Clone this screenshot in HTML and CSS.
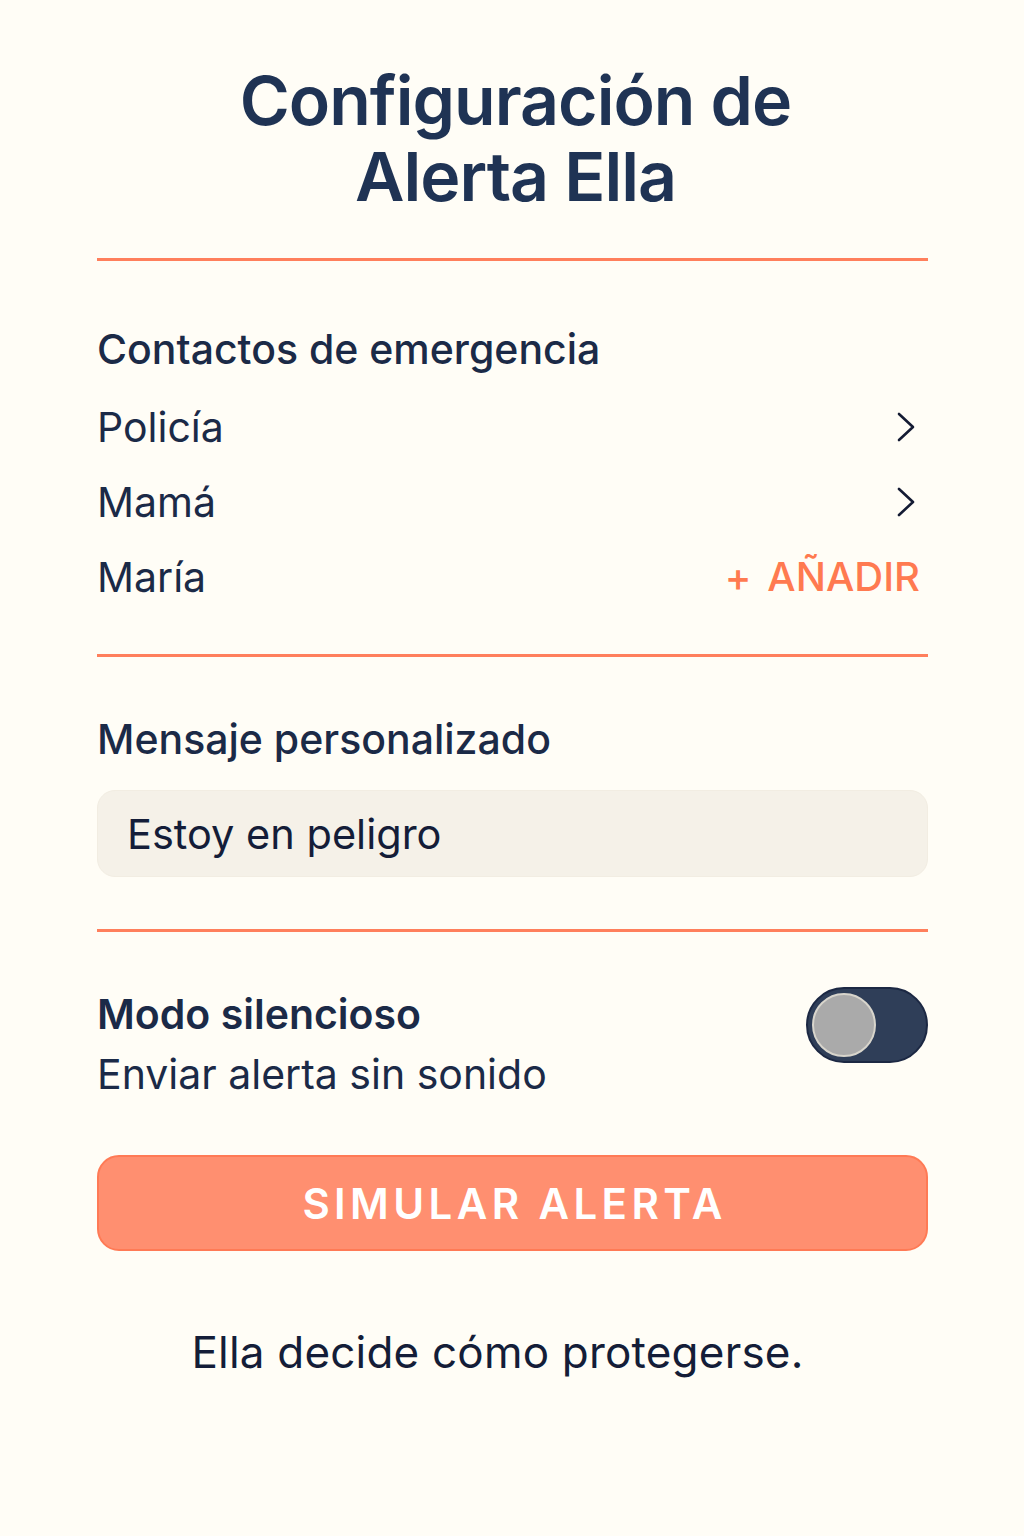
FILE: index.html
```html
<!DOCTYPE html>
<html lang="es">
<head>
<meta charset="utf-8">
<title>Configuración de Alerta Ella</title>
<link rel="stylesheet" href="styles.css">
</head>
<body>
<main class="page">
  <h1 class="title">Configuración de<br>Alerta Ella</h1>
  <hr class="divider">
  <section class="section contacts">
    <h2 class="section-title">Contactos de emergencia</h2>
    <ul class="contact-list">
      <li class="contact-row"><span>Policía</span>
        <svg class="chevron" viewBox="0 0 20 32" width="20" height="32"><path d="M3 3 L17 16 L3 29" fill="none" stroke="#141b33" stroke-width="2.6" stroke-linecap="round" stroke-linejoin="round"/></svg>
      </li>
      <li class="contact-row"><span>Mamá</span>
        <svg class="chevron" viewBox="0 0 20 32" width="20" height="32"><path d="M3 3 L17 16 L3 29" fill="none" stroke="#141b33" stroke-width="2.6" stroke-linecap="round" stroke-linejoin="round"/></svg>
      </li>
      <li class="contact-row"><span>María</span><span class="add"><span class="plus">+</span>AÑADIR</span></li>
    </ul>
  </section>
  <hr class="divider">
  <section class="section message">
    <h2 class="section-title">Mensaje personalizado</h2>
    <div class="input">Estoy en peligro</div>
  </section>
  <hr class="divider">
  <section class="silent">
    <div class="silent-text">
      <div class="silent-title">Modo silencioso</div>
      <div class="silent-sub">Enviar alerta sin sonido</div>
    </div>
    <div class="toggle"><div class="knob"></div></div>
  </section>
  <button class="cta">SIMULAR ALERTA</button>
  <p class="footer">Ella decide cómo protegerse.</p>
</main>
</body>
</html>
```
FILE: styles.css
```css
* { box-sizing: border-box; }
html, body { margin: 0; padding: 0; }
body {
  background: #fffdf6;
  font-family: "Inter", "Noto Sans", sans-serif;
  color: #1b2a47;
  width: 1024px;
  height: 1536px;
}
.page {
  padding: 62px 96px 0 97px;
  display: flex;
  flex-direction: column;
}
.title {
  margin: 0;
  padding-left: 6px;
  text-align: center;
  font-size: 68px;
  line-height: 76px;
  font-weight: 600;
  color: #1f3354;
  letter-spacing: -1px;
}
.divider {
  border: 0;
  height: 3px;
  background: #ff7f5c;
  margin: 0;
  width: 831px;
}
.page > .divider:first-of-type { margin-top: 44px; }
.section-title {
  margin: 0;
  font-size: 41px;
  font-weight: 500;
  color: #1b2a47;
  line-height: 48px;
}
.contacts { padding-top: 64px; padding-bottom: 40px; }
.contact-list { list-style: none; margin: 16px 0 0; padding: 0; }
.contact-row {
  display: flex;
  justify-content: space-between;
  align-items: center;
  height: 75px;
  font-size: 41px;
  color: #1b2a47;
  padding-right: 8px;
}
.chevron { margin-right: 4px; }
.add { color: #ff7a50; font-weight: 500; font-size: 40px; }
.plus { margin-right: 16px; }
.message { padding-top: 58px; padding-bottom: 52px; }
.input {
  margin-top: 27px;
  background: #f5f1e8;
  border-radius: 18px;
  height: 87px;
  padding: 0 29px;
  display: flex;
  align-items: center;
  font-size: 41.5px;
  color: #141d38;
  border: 1px solid #f2ede2;
}
.silent {
  display: flex;
  justify-content: space-between;
  align-items: flex-start;
  padding-top: 56px;
}
.silent-title { font-size: 41px; font-weight: 600; color: #1b2a47; line-height: 52px; }
.silent-sub { font-size: 41px; color: #1b2a47; line-height: 68px; }
.toggle {
  width: 122px;
  height: 76px;
  border-radius: 38px;
  background: #2f3e58;
  border: 2px solid #1c2843;
  display: flex;
  align-items: center;
  padding-left: 4px;
  margin-top: -1px;
}
.knob {
  width: 64px;
  height: 64px;
  border-radius: 50%;
  background: #aaaaaa;
  border: 2px solid #d8d5cc;
}
.cta {
  margin-top: 47px;
  height: 96px;
  width: 831px;
  border-radius: 22px;
  background: #ff8f70;
  border: 2px solid #ff7a55;
  color: #ffffff;
  font-family: "Inter", "Noto Sans", sans-serif;
  font-size: 42px;
  font-weight: 600;
  letter-spacing: 4.4px;
  padding: 0 0 0 4px;
}
.footer {
  margin: 74px 0 0;
  padding-right: 30px;
  text-align: center;
  font-size: 44px;
  letter-spacing: 0.2px;
  color: #141d38;
}
```
